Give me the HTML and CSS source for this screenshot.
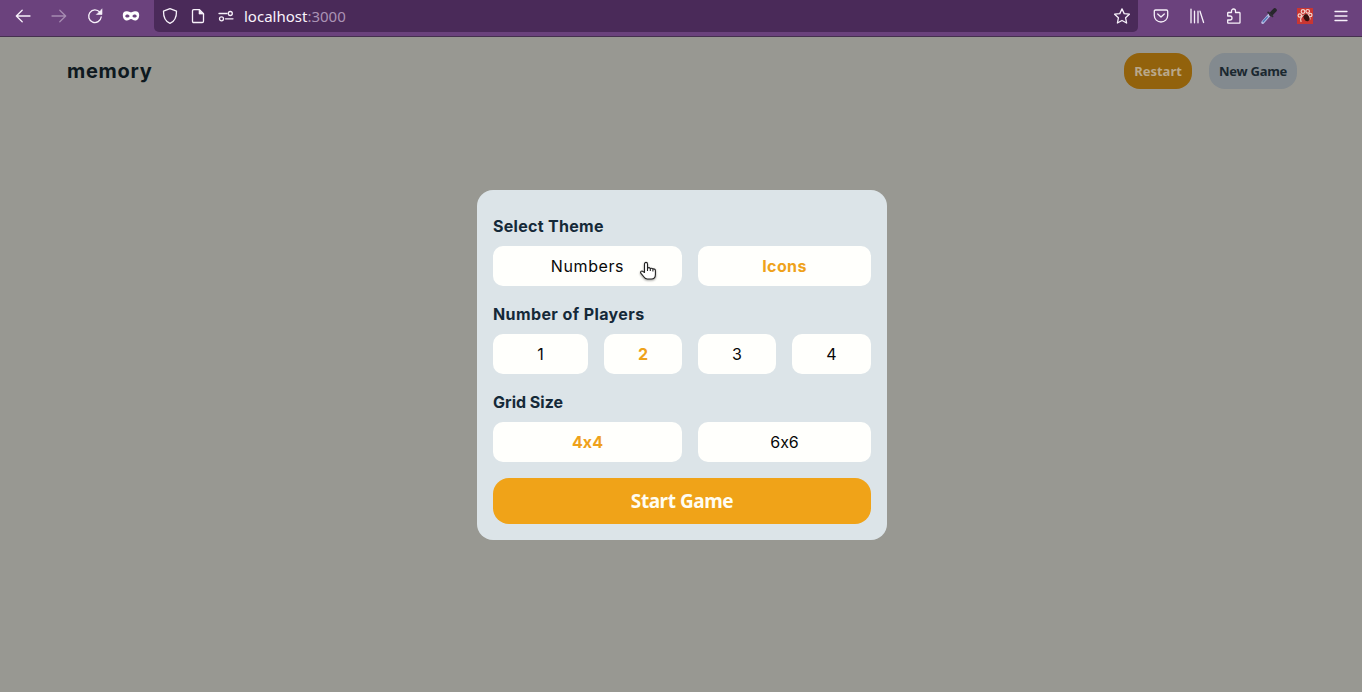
FILE: index.html
```html
<!DOCTYPE html>
<html lang="en">
<head>
<meta charset="utf-8">
<title>memory</title>
<link rel="stylesheet" href="styles.css">
</head>
<body>
<div class="toolbar">
  <div class="nav">
    <svg class="icon" viewBox="0 0 16 16"><path d="M15 8H1.500M7.200 2.200 1.300 8l5.900 5.800"/></svg>
    <svg class="icon dim" viewBox="0 0 16 16"><path d="M1 8h13.500M8.800 2.200 14.700 8l-5.900 5.800"/></svg>
    <svg class="icon" viewBox="0 0 16 16"><path d="M14.200 9A6.300 6.300 0 1 1 12.800 4.200"/><path class="solid" d="M15 1.200v5.300H9.700z"/></svg>
    <svg class="icon mask" viewBox="0 0 16 16"><path fill-rule="evenodd" d="M3.500 3.300C5.500 3 6.700 4.300 8 4.300s2.500-1.300 4.500-1c2.500.1 3.700 1.300 3.700 3.700 0 3-1.500 5.500-4 5.500C10 12.500 9.300 11 8 11s-2 1.500-4.200 1.500c-2.500 0-4-2.500-4-5.500 0-2.400 1.200-3.600 3.700-3.700zM2.100 8c.8 2.100 3.600 2.100 4.600 0-1-2.100-3.800-2.100-4.600 0zm7.200 0c1 2.100 3.800 2.100 4.600 0-.8-2.100-3.600-2.100-4.600 0z"/></svg>
  </div>
  <div class="address">
    <svg class="icon" viewBox="0 0 16 16"><path d="M8 .7 14.500 3.200C14.600 8.500 12.700 13.300 8 15.400 3.300 13.300 1.400 8.500 1.500 3.200z"/></svg>
    <svg class="icon page" viewBox="0 0 16 16"><path d="M3.800 1.600h5.700l4 4v7.600q0 1.300-1.300 1.300H3.800q-1.300 0-1.300-1.300V2.900q0-1.300 1.300-1.300z"/><path class="solid" d="M9 1.600v4.500h4.500z"/></svg>
    <svg class="icon" viewBox="0 0 16 16"><path d="M1 5.500h8M7.500 10.800H15"/><circle cx="12.300" cy="5.500" r="2"/><circle cx="3.500" cy="10.800" r="2"/></svg>
    <div class="url">localhost<span>:3000</span></div>
    <svg class="icon star" viewBox="0 0 16 16"><path d="m8 .9 2.200 4.700 5.200.6-3.800 3.600 1 5.200L8 12.500 3.400 15l1-5.200L.6 6.200l5.200-.6z"/></svg>
  </div>
  <div class="extensions">
    <svg class="icon" viewBox="0 0 16 16"><path d="M2.600 2h10.800q1.300 0 1.300 1.300V7.500A6.700 6.500 0 0 1 1.300 7.500V3.300Q1.300 2 2.600 2zM4.700 6 8 9l3.300-3"/></svg>
    <svg class="icon" viewBox="0 0 16 16"><path d="M2 1.200v13.600M5.500 3.200v11.600M9 3.200v11.600M11 3.200l3.600 11.300"/></svg>
    <svg class="icon puzzle" viewBox="0 0 16 16"><path d="M1.700 8V5.200q0-.7.700-.7H5.500V3a2 2 0 0 1 4 0v1.500h3.700q.8 0 .8.800v9.200q0 .7-.7.700H2.400q-.7 0-.7-.7V12H4a2 2 0 0 0 0-4z"/></svg>
    <svg class="icon" viewBox="0 0 16 16"><path class="tube" d="M1.700 14.500 8.500 6.700"/><path class="liquid" d="m2.200 13.500 4.200-4.600"/><path class="bulb" d="m10 6.200 3.800-4"/><path class="collar" d="m7.200 4.400 4.300 4"/></svg>
    <svg class="icon paw" viewBox="0 0 16 16"><path class="red" d="M0 0h16v16H0z"/><circle cx="6" cy="3.500" r="1.800"/><circle cx="10.700" cy="3.300" r="1.800"/><circle cx="2.800" cy="7.500" r="1.700"/><circle cx="13.300" cy="7" r="1.700"/><path d="M4 13.500c-1.500-3 1-6.200 4-6.500s5 2 5 4"/><ellipse class="bug" cx="9.500" cy="9.700" rx="2.700" ry="3.700" transform="rotate(-30 9.500 9.700)"/></svg>
    <svg class="icon" viewBox="0 0 16 16"><path d="M2 3.500h12M2 8h12M2 12.500h12"/></svg>
  </div>
</div>

<div class="app">
  <header class="header">
    <h1 class="logo">memory</h1>
    <div class="actions">
      <button class="restart">Restart</button>
      <button class="new-game">New Game</button>
    </div>
  </header>
  <main class="stage">
    <div class="modal">
      <h2 class="theme-title">Select Theme</h2>
      <div class="options halves">
        <div class="option numbers">Numbers</div>
        <div class="option selected icons">Icons</div>
      </div>
      <h2 class="players-title">Number of Players</h2>
      <div class="options quarters">
        <div class="option">1</div>
        <div class="option selected">2</div>
        <div class="option">3</div>
        <div class="option">4</div>
      </div>
      <h2 class="grid-title">Grid Size</h2>
      <div class="options halves">
        <div class="option selected size">4x4</div>
        <div class="option size">6x6</div>
      </div>
      <button class="start">Start Game</button>
    </div>
  </main>
</div>
<svg class="cursor" viewBox="0 0 18 20"><path d="M5.500 11.500V3.200C5.500.8 8.500.8 8.500 3.200v4q1.600-1.200 2.800.3 1.600-.8 2.600.5 2.500-.5 2.500 1.800v3.700q0 4.500-4 4.500H8.300q-2 0-3.300-2L2 12.400C.8 10.700 2.700 9.300 4 10.500zM8.500 7v3M11.300 7.500V10M13.900 8v2.500"/></svg>
</body>
</html>
```

FILE: styles.css
```css
* { box-sizing: border-box; }
body {
  margin: 0;
  height: 692px;
  display: flex;
  flex-direction: column;
  overflow: hidden;
  background: #989892;
  font-family: Inter, "Noto Sans", sans-serif;
}
.toolbar {
  height: 37px;
  flex: none;
  display: flex;
  align-items: flex-start;
  background: #6b427d;
  border-bottom: 1px solid #45304f;
}
.icon {
  display: block;
  flex: none;
  width: 16px;
  height: 16px;
  fill: none;
  stroke: #f7f1fa;
  stroke-width: 1.3;
  stroke-linecap: round;
  stroke-linejoin: round;
  overflow: visible;
}
.icon .solid { fill: #f7f1fa; stroke-width: .6; }
.dim { opacity: .42; }
.icon.mask { fill: #fff; stroke: none; }
.nav {
  width: 154px;
  padding: 8px 0 0 15px;
  display: flex;
  gap: 20px;
}
.address {
  width: 984px;
  height: 32px;
  padding: 0 8px;
  display: flex;
  align-items: center;
  background: #4a2a59;
  border-radius: 0 0 5px 5px;
}
.address .icon { margin-right: 12px; }
.address .star { margin-right: 0; }
.url {
  flex: 1;
  margin-left: -2px;
  color: #f9f3fc;
  font: 15px/22px "Noto Sans", sans-serif;
  letter-spacing: 0;
}
.url span { color: #aa93b5; }
.extensions {
  padding: 8px 0 0 15px;
  display: flex;
  gap: 20px;
}
.puzzle { margin-left: 1px; margin-right: -1px; }
.tube { stroke: #b5b8df; stroke-width: 3; }
.liquid { stroke: #4b79b8; stroke-width: 1.3; }
.bulb { stroke: #28272c; stroke-width: 4; }
.collar { stroke: #302e35; stroke-width: 1.8; }
.paw .red { fill: #c93632; stroke: none; }
.icon.paw { stroke: #f3d5cd; stroke-width: 1.2; }
.bug { fill: #35120f; stroke: none; }

.app {
  flex: 1;
  display: flex;
  flex-direction: column;
}
.header {
  height: 68px;
  padding: 0 65px 0 67px;
  display: flex;
  align-items: center;
  justify-content: space-between;
}
h1, h2 { margin: 0; }
.logo {
  color: #0e1920;
  font-size: 20px;
  line-height: 30px;
  font-weight: 700;
  letter-spacing: .7px;
}
.actions { display: flex; gap: 17px; }
button {
  border: 0;
  padding: 0;
  font-family: "Noto Sans", sans-serif;
  font-weight: 700;
}
.restart, .new-game {
  height: 36px;
  border-radius: 16px;
  font-size: 13px;
  line-height: 36px;
}
.restart { width: 68px; background: #92620c; color: #b9a88a; }
.new-game { width: 88px; background: #838a8f; color: #1b2830; letter-spacing: -.25px; }
.stage {
  flex: 1;
  display: flex;
  justify-content: center;
  align-items: flex-start;
  padding: 85px 0 0 2px;
}
.modal {
  width: 410px;
  height: 350px;
  padding: 24px 16px 16px;
  background: #dce4e8;
  border-radius: 16px;
}
h2 {
  height: 24px;
  color: #152938;
  font-size: 16px;
  line-height: 24px;
  font-weight: 700;
}
.theme-title { letter-spacing: .3px; }
.players-title { letter-spacing: .4px; }
.options {
  display: grid;
  gap: 16px;
  margin: 8px 0 16px;
}
.halves { grid-template-columns: 189px 173px; }
.quarters { grid-template-columns: 95px 78px 78px 79px; }
.option {
  height: 40px;
  background: #fffffc;
  border-radius: 10px;
  color: #080808;
  font-size: 16px;
  line-height: 40px;
  text-align: center;
}
.numbers { letter-spacing: .6px; }
.icons { letter-spacing: .4px; }
.size { font-feature-settings: "calt" 0; }
.selected { color: #efa21b; font-weight: 700; }
.start {
  display: block;
  width: 100%;
  height: 46px;
  border-radius: 16px;
  background: #f0a318;
  color: #fffdf2;
  font-size: 19px;
  line-height: 46px;
  letter-spacing: -.45px;
}
.cursor {
  position: absolute;
  left: 638.500px;
  top: 261px;
  width: 18px;
  height: 20px;
  fill: #fff;
  stroke: #222;
  stroke-width: 1.1;
  stroke-linejoin: round;
  filter: drop-shadow(0 1px 1px #0006);
}
```
